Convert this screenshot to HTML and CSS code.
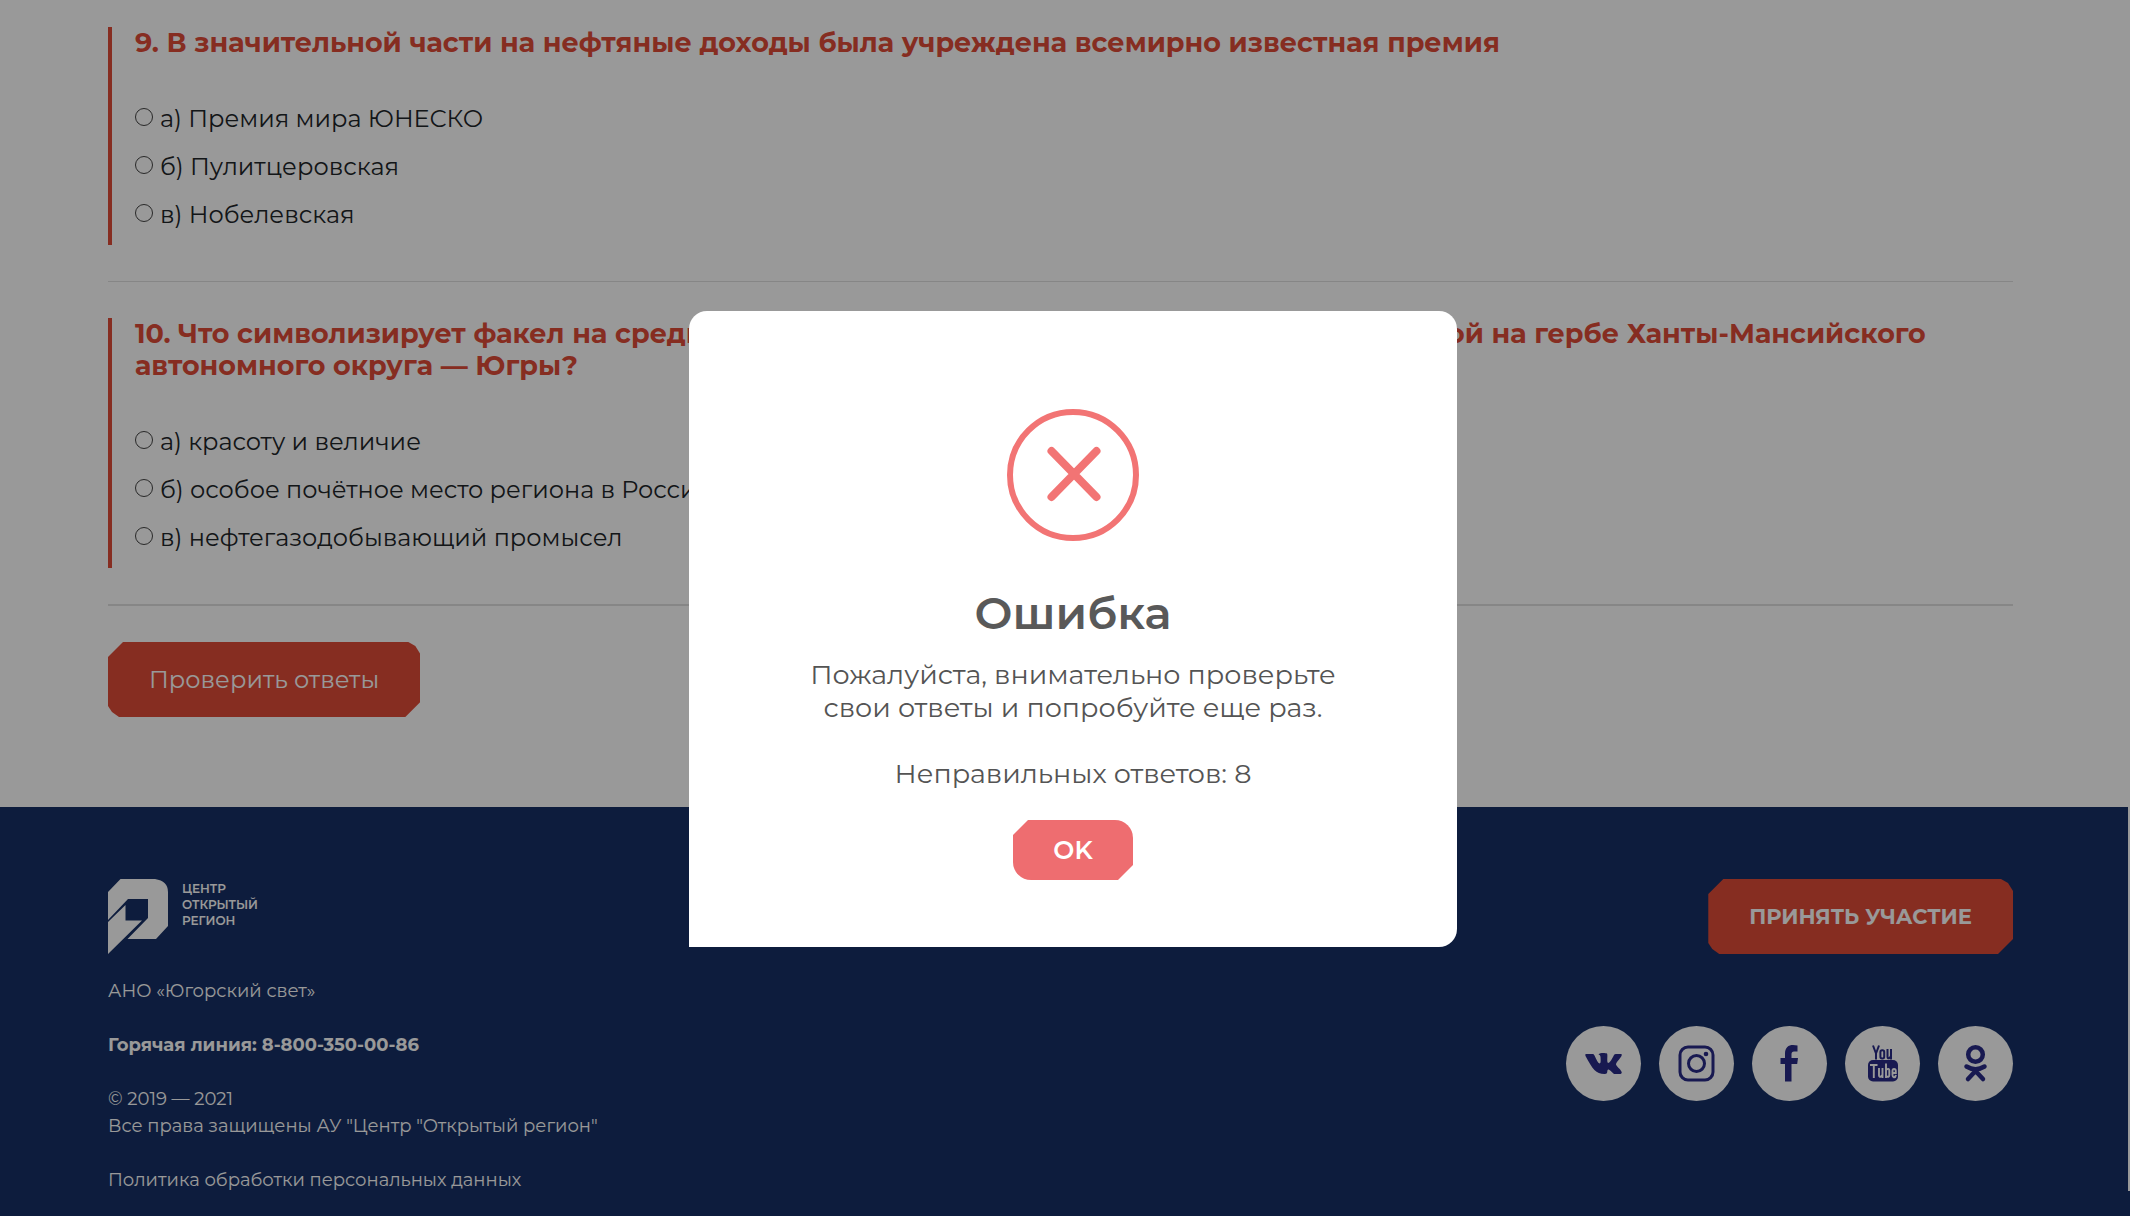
FILE: index.html
```html
<!DOCTYPE html>
<html lang="ru">
<head>
  <meta charset="UTF-8">
  <meta name="viewport" content="width=device-width, initial-scale=1.0">
  <title>Викторина - Центр «Открытый регион»</title>
  <link rel="stylesheet" href="styles.css">
</head>
<body>
  <div class="page">
    <main class="container">
      <form class="quiz">
        <fieldset class="question">
          <legend>9. В значительной части на нефтяные доходы была учреждена всемирно известная премия</legend>
          <label><input type="radio" name="q9" value="a"> а) Премия мира ЮНЕСКО</label>
          <label><input type="radio" name="q9" value="b"> б) Пулитцеровская</label>
          <label><input type="radio" name="q9" value="c"> в) Нобелевская</label>
        </fieldset>
        <hr>
        <fieldset class="question">
          <legend>10. Что символизирует факел на среднем возвышении серебряной короны, изображённой на гербе Ханты-Мансийского автономного округа — Югры?</legend>
          <label><input type="radio" name="q10" value="a"> а) красоту и величие</label>
          <label><input type="radio" name="q10" value="b"> б) особое почётное место региона в России</label>
          <label><input type="radio" name="q10" value="c"> в) нефтегазодобывающий промысел</label>
        </fieldset>
        <hr>
        <button type="button" class="btn">Проверить ответы</button>
      </form>
    </main>

    <footer class="footer">
      <div class="container footer-inner">
        <div class="footer-info">
          <a href="#" class="logo">
            <svg width="60" height="75" viewBox="0 0 60 75" aria-hidden="true">
              <path fill="#fff" d="M0 13 12.500 0H47Q60 2 60 13V47L48 60H19.500L40 39V20H20L0 41Z"/>
              <path fill="#fff" d="M0 43 17.500 26V41.500H34L0 75Z"/>
            </svg>
            <span>ЦЕНТР<br>ОТКРЫТЫЙ<br>РЕГИОН</span>
          </a>
          <p>АНО «Югорский свет»</p>
          <p><strong>Горячая линия: 8-800-350-00-86</strong></p>
          <p>© 2019 — 2021<br>Все права защищены АУ "Центр "Открытый регион"</p>
          <p><a href="#">Политика обработки персональных данных</a></p>
        </div>
        <div class="footer-side">
          <a href="#" class="btn btn-join">ПРИНЯТЬ УЧАСТИЕ</a>
          <div class="socials">
            <a href="#" aria-label="ВКонтакте">
              <svg viewBox="0 0 75 75"><path d="M20 28H27Q28 28 28.500 29.500C30.500 34 32 37 33.500 37.500C35 37.500 34.700 34 34.500 31C34.400 29 33 28.800 32.500 28.500C34 26.500 39 26.800 41 27.500C42 29 40.500 36 42 37C44 37 46.500 32 48 29Q48.500 28 50 28H55Q56.500 28 55.500 30C53.500 33.500 50 36.500 50 38.500C50.500 40.500 54.500 43 55.700 46Q56 48 53.500 48H48.500C46.500 47.500 44 43.500 42.500 43.500C41 43.500 41.500 46 41 47Q40.500 48 38.500 48C30 48 26.500 43 19.500 30Q18.700 28 20 28Z"/></svg>
            </a>
            <a href="#" aria-label="Instagram">
              <svg viewBox="0 0 75 75"><g class="line" stroke-width="3"><rect x="21" y="21" width="33" height="33" rx="8"/><circle cx="37.500" cy="37.500" r="8"/></g><circle cx="47" cy="28" r="2.300"/></svg>
            </a>
            <a href="#" aria-label="Facebook">
              <svg viewBox="0 0 75 75"><path d="M45.500 19.500V25.500H42Q39.500 25.500 39.500 28V32H46L45.200 38H39.500V55.500H33V38H28.500V32H33V27.500C33 21.500 36.500 19 41 19Z"/></svg>
            </a>
            <a href="#" aria-label="YouTube">
              <svg viewBox="0 0 75 75">
                <rect x="23" y="34" width="30" height="21.500" rx="5"/>
                <g class="line" stroke-width="2"><path d="M28 19.500 31 27.500 34 19.500M31 27V33.500"/><rect x="35.400" y="24.200" width="3.800" height="8.200" rx="1.700"/><path d="M42.500 23V30.800Q42.500 32.500 44 32.200L46 30.500M46 23V33.500"/></g>
                <g fill="none" stroke="#fff" stroke-width="1.900"><path d="M25 39H32.500M28.800 39V52M34 42V49.500Q34.200 51.200 36 50.500L37.500 49M37.500 42V52M41 37.500V52M41 44Q44.300 41.500 44.300 44.500V49Q44.300 52 41 50M51 49Q50.500 51.500 48.800 51.200Q47.500 51 47.500 49V45Q47.500 43 49 43Q50.800 43 50.800 45V47H47.500"/></g>
              </svg>
            </a>
            <a href="#" aria-label="Одноклассники">
              <svg viewBox="0 0 75 75"><g class="line" stroke-width="4.500" stroke-linecap="round"><circle cx="37.500" cy="28.500" r="7.300"/><path d="M28.500 40.500Q37.500 46 46.500 40.500M37.500 45 30 53M37.500 45 45 53"/></g></svg>
            </a>
          </div>
        </div>
      </div>
    </footer>
  </div>

  <div class="overlay">
    <div class="modal" role="dialog" aria-modal="true" aria-labelledby="modal-title">
      <svg class="modal-icon" viewBox="0 0 132 132" aria-hidden="true">
        <g fill="none" stroke="#f27474" stroke-width="6"><circle cx="66" cy="66" r="63"/><path stroke-width="8" stroke-linecap="round" d="M44.500 42 89.500 88M89.500 42 44.500 88"/></g>
      </svg>
      <h2 id="modal-title">Ошибка</h2>
      <p>Пожалуйста, внимательно проверьте<br>свои ответы и попробуйте еще раз.</p>
      <p>Неправильных ответов: 8</p>
      <button type="button" class="modal-ok">OK</button>
    </div>
  </div>
</body>
</html>
```
FILE: styles.css
```css
:root {
  --red: #df4c38;
  --navy: #173066;
  --icon: #282b88;
  --text: #212529;
}
* { box-sizing: border-box; }
body {
  margin: 0;
  height: 100vh;
  overflow: hidden;
  font-family: Montserrat, Inter, "Open Sans", sans-serif;
  font-size: 24px;
  line-height: 32px;
  color: var(--text);
  background: #fff;
}
a { color: inherit; text-decoration: none; }
.page {
  height: 100vh;
  display: flex;
  flex-direction: column;
}
.container {
  width: 100%;
  padding: 0 117px 0 108px;
}

/* Вопросы */
.quiz { padding: 27px 0 90px; }
.question {
  display: flow-root;
  margin: 0;
  padding: 0 0 0 23px;
  border: 0;
  border-left: 4px solid var(--red);
}
.question legend {
  float: left;
  width: 100%;
  margin-bottom: 44px;
  padding: 0;
  font-size: 27px;
  font-weight: 700;
  color: var(--red);
}
.question label {
  clear: both;
  display: flex;
  align-items: center;
  gap: 7px;
  margin-bottom: 16px;
}
.question label:last-child { margin-bottom: 14px; }
.question input {
  appearance: none;
  width: 18px;
  height: 18px;
  margin: 0 0 4px;
  border: 1px solid #444;
  border-radius: 50%;
}
hr {
  margin: 36px 0;
  border: 0;
  border-top: 1px solid #e0e0e0;
}
hr:last-of-type { border-top-width: 2px; }
.btn {
  display: inline-flex;
  align-items: center;
  justify-content: center;
  height: 75px;
  padding: 0 41px;
  border: 0;
  font: inherit;
  color: #fff;
  background: var(--red);
  clip-path: polygon(15px 0, calc(100% - 12px) 0, calc(100% - 5px) 4px, 100% 12px, 100% calc(100% - 15px), calc(100% - 15px) 100%, 11px 100%, 4px calc(100% - 5px), 0 calc(100% - 11px), 0 15px);
  cursor: pointer;
}
.quiz .btn { display: flex; }

/* Подвал */
.footer {
  flex: 1;
  padding: 72px 0 0;
  font-size: 18px;
  line-height: 27px;
  color: #fff;
  background: linear-gradient(#fff, #fff) right top / 2px calc(100% - 25px) no-repeat var(--navy);
}
.footer-inner {
  display: flex;
  justify-content: space-between;
}
.footer p { margin: 0 0 27px; }
.footer p:last-child { margin-bottom: 0; }
.logo {
  display: flex;
  gap: 14px;
  margin-bottom: 24px;
  font-size: 12px;
  font-weight: 600;
  line-height: 16px;
}
.logo span { padding-top: 2px; }
.footer-side {
  display: flex;
  flex-direction: column;
  align-items: flex-end;
  gap: 72px;
}
.btn-join {
  font-size: 21px;
  font-weight: 700;
}
.socials {
  display: flex;
  gap: 18px;
}
.socials a {
  width: 75px;
  height: 75px;
  border-radius: 50%;
  background: #fff;
}
.socials svg {
  display: block;
  fill: var(--icon);
}
.socials .line {
  fill: none;
  stroke: var(--icon);
}

/* Модальное окно */
.overlay {
  position: fixed;
  inset: 0;
  display: flex;
  align-items: center;
  justify-content: center;
  padding: 42px 0 0 16px;
  background: rgba(0, 0, 0, 0.4);
}
.modal {
  display: flex;
  flex-direction: column;
  align-items: center;
  width: 768px;
  max-width: 100%;
  padding: 98px 30px 67px;
  border-radius: 18px 18px 18px 0;
  font-size: 27px;
  line-height: 33px;
  text-align: center;
  color: #545454;
  background: #fff;
}
.modal-icon { width: 132px; }
.modal h2 {
  margin: 44px 0 18px;
  font-size: 45px;
  font-weight: 600;
  line-height: 55px;
  color: #595959;
}
.modal p { margin: 0 0 33px; }
.modal p:last-of-type { margin-bottom: 30px; }
.modal-ok {
  min-width: 120px;
  height: 60px;
  border: 0;
  border-radius: 0 18px 0 18px;
  font: 600 25px Montserrat, Inter, "Open Sans", sans-serif;
  color: #fff;
  background: #ee6d70;
  clip-path: polygon(15px 0, 100% 0, 100% calc(100% - 15px), calc(100% - 15px) 100%, 0 100%, 0 15px);
  cursor: pointer;
}
```
